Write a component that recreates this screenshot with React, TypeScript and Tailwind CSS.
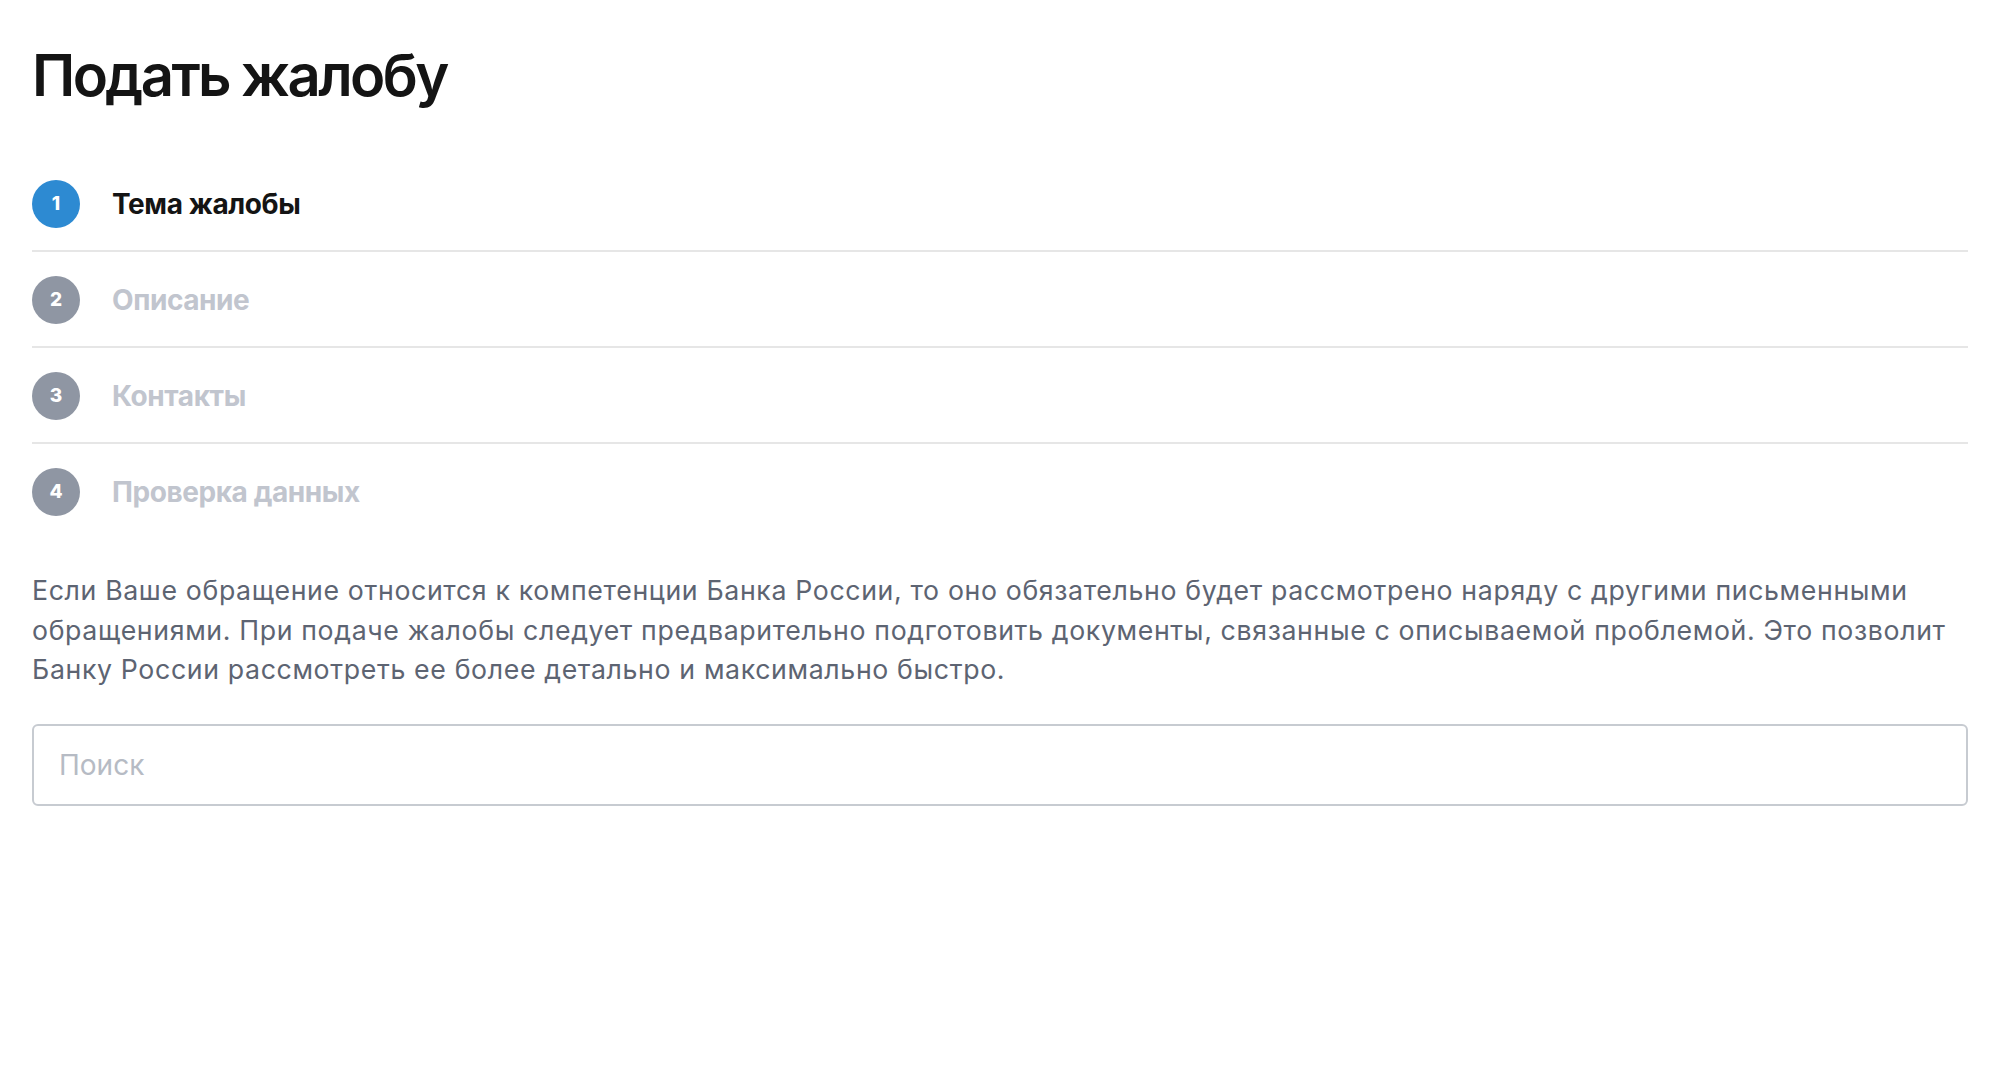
import React, { useState } from 'react';

const steps = [
  { n: 1, title: 'Тема жалобы' },
  { n: 2, title: 'Описание' },
  { n: 3, title: 'Контакты' },
  { n: 4, title: 'Проверка данных' },
];

export default function App() {
  const [query, setQuery] = useState('');
  const active = 1;

  return (
    <div className="min-h-screen bg-white px-8 pt-[39px] font-['Inter',sans-serif]">
      <h1 className="text-[58px] leading-[72px] font-semibold tracking-[-0.045em] text-[#141414]">
        Подать жалобу
      </h1>

      <div className="mt-[69px]">
        {steps.map((s, i) => (
          <div
            key={s.n}
            className={`flex items-center gap-8 ${i === 0 ? 'pt-0' : 'pt-6'} ${
              i < steps.length - 1 ? 'pb-[22px] border-b-2 border-[#e6e6e6]' : ''
            }`}
          >
            <div
              className={`w-12 h-12 rounded-full flex items-center justify-center text-white text-[19px] font-extrabold ${
                s.n === active ? 'bg-[#2d8ad2]' : 'bg-[#8f96a3]'
              }`}
            >
              {s.n}
            </div>
            <span
              className={`text-[28px] font-bold tracking-[-0.015em] ${
                s.n === active ? 'text-[#141414]' : 'text-[#c1c5ce]'
              }`}
            >
              {s.title}
            </span>
          </div>
        ))}
      </div>

      <p className="mt-[55px] text-[26.7px] leading-[39.5px] tracking-[0.024em] text-[#5d6472]">
        Если Ваше обращение относится к компетенции Банка России, то оно обязательно будет рассмотрено наряду с другими
        письменными обращениями. При подаче жалобы следует предварительно подготовить документы, связанные с описываемой
        проблемой. Это позволит Банку России рассмотреть ее более детально и максимально быстро.
      </p>

      <input
        value={query}
        onChange={e => setQuery(e.target.value)}
        placeholder="Поиск"
        className="mt-[34px] w-full h-[82px] rounded-[6px] border-2 border-[#c7cbd1] px-[25px] text-[28px] text-[#141414] placeholder:text-[#b6bbc4] outline-none"
      />
    </div>
  );
}
